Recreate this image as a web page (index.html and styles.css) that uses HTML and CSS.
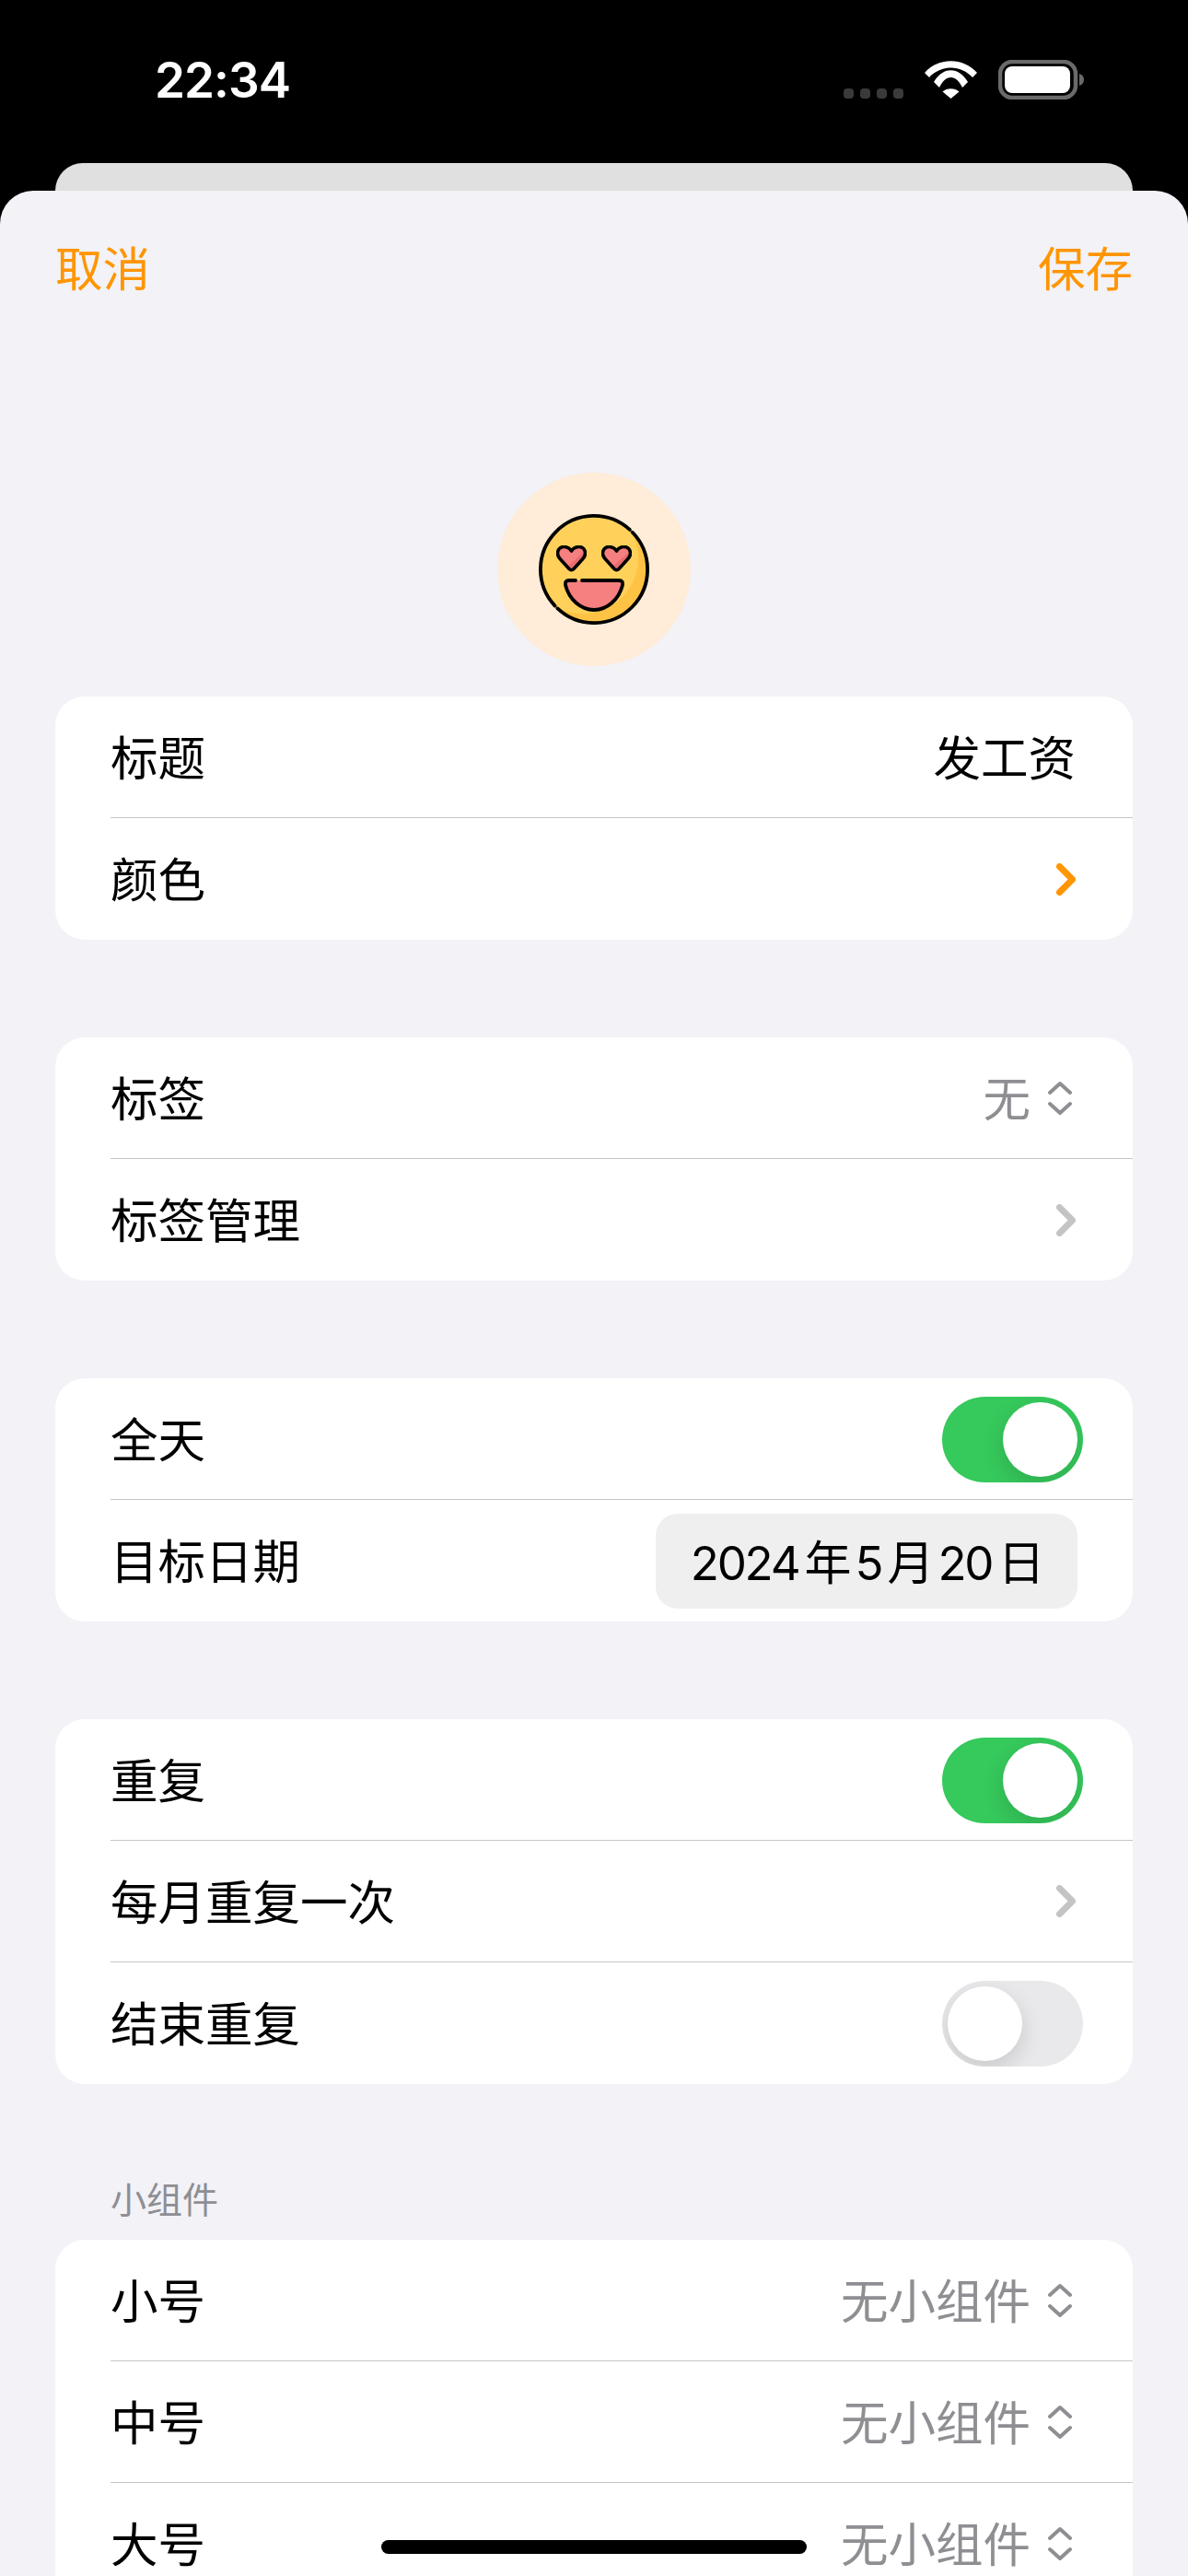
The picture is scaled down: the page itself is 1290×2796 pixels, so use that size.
FILE: index.html
```html
<!DOCTYPE html>
<html lang="zh-CN">
<head>
    <meta charset="UTF-8">
    <meta name="viewport" content="width=device-width, initial-scale=1.0">
    <title>编辑</title>
    <link rel="stylesheet" href="styles.css">
</head>
<body>
  <svg class="defs" xmlns="http://www.w3.org/2000/svg">
    <symbol id="chevron" viewBox="0 0 21 35">
      <path d="M3.5 3.5 L17.5 17.5 L3.5 31.5" fill="none" stroke="currentColor" stroke-width="7" stroke-linecap="round" stroke-linejoin="round"/>
    </symbol>
    <symbol id="updown" viewBox="0 0 26 38">
      <path d="M2 13 L13 3 L24 13 M2 25 L13 35 L24 25" fill="none" stroke="currentColor" stroke-width="4" stroke-linecap="round" stroke-linejoin="round"/>
    </symbol>
    <symbol id="heart" viewBox="0 0 33 29">
      <path d="M16.5 6 C14 2 11 1.5 8 1.5 C4 1.5 1.5 5 1.5 8.5 C1.5 11 2.5 13 4.5 15 L14 25.5 C15.5 27 17.5 27 19 25.5 L28.500 15 C30.500 13 31.500 11 31.500 8.500 C31.500 5 29 1.500 25 1.500 C22 1.500 19 2 16.500 6Z" fill="#f67f80"/>
      <path d="M29 8 L12 23 L14 25.500 C15.500 27 17.500 27 19 25.500 L28.500 15 C30.500 13 31 11 29 8Z" fill="#e96d70"/>
      <path d="M16.5 6 C14 2 11 1.5 8 1.5 C4 1.5 1.5 5 1.5 8.5 C1.5 11 2.5 13 4.5 15 L14 25.5 C15.5 27 17.5 27 19 25.5 L28.500 15 C30.500 13 31.500 11 31.500 8.500 C31.500 5 29 1.500 25 1.500 C22 1.500 19 2 16.500 6Z" fill="none" stroke="#000" stroke-width="3.600" stroke-linejoin="round"/>
    </symbol>
    <clipPath id="face-clip">
      <circle cx="60" cy="60" r="58"/>
    </clipPath>
  </svg>

  <header class="status-bar">
    <span class="time">22:34</span>
    <div class="status-icons">
      <svg class="signal" viewBox="0 0 65 11">
        <rect x="0" width="11" height="11" rx="4" fill="#3a3a3a"/>
        <rect x="18" width="11" height="11" rx="4" fill="#3a3a3a"/>
        <rect x="36" width="11" height="11" rx="4" fill="#3a3a3a"/>
        <rect x="54" width="11" height="11" rx="4" fill="#3a3a3a"/>
      </svg>
      <svg class="wifi" viewBox="0 0 57 41">
        <path d="M0 13 C15 -4 42 -4 57 13 L52 18 C39 4 18 4 5 18Z" fill="#fff"/>
        <path d="M10 23 C20 6 37 6 47 23 L41 29 C34 14.300 23 14.300 16 29Z" fill="#fff"/>
        <path d="M19.500 33.500 C24 29 33 29 37.500 33.500 L28.500 41Z" fill="#fff"/>
      </svg>
      <svg class="battery" viewBox="0 0 93 43">
        <rect x="2" y="2" width="82" height="39" rx="13" fill="none" stroke="#6a6a6a" stroke-width="4.500"/>
        <rect x="7" y="7" width="71" height="29" rx="8" fill="#fff"/>
        <path d="M88 15 C91 16 93 18 93 21.500 C93 25 91 27 88 28Z" fill="#6a6a6a"/>
      </svg>
    </div>
  </header>

  <div class="back-card"></div>

  <main class="sheet">
    <nav class="nav">
      <span>取消</span>
      <span>保存</span>
    </nav>

    <div class="avatar">
      <svg class="face" viewBox="0 0 120 120">
        <circle cx="60" cy="60" r="58" fill="#fec344"/>
        <circle cx="48" cy="48" r="60" fill="#ffd15b" clip-path="url(#face-clip)"/>
        <path d="M101.700 19.700 A58 58 0 0 1 20.400 102.400" fill="none" stroke="#000" stroke-width="3.800" stroke-linecap="round"/>
        <path d="M17.600 99.600 A58 58 0 0 1 98.800 16.900" fill="none" stroke="#000" stroke-width="3.800" stroke-linecap="round"/>
        <use href="#heart" x="19" y="34" width="33" height="29"/>
        <use href="#heart" x="68" y="34" width="33" height="29"/>
        <path d="M33 72 H87 Q92 72 91 77 C87 93 74 104 60 104 C46 104 33 93 29 77 Q28 72 33 72Z" fill="#f67f80"/>
        <path d="M47 72 H87 Q92 72 91 77 C87 93 74 104 60 104 C46 104 33 93 29 77 Q28 72 33 72 H40" fill="none" stroke="#000" stroke-width="3.800" stroke-linecap="round"/>
      </svg>
    </div>

    <section class="card">
      <div class="row">
        <span class="text">标题</span>
        <span class="text">发工资</span>
      </div>
      <div class="row">
        <span class="text">颜色</span>
        <svg class="chevron accent"><use href="#chevron"/></svg>
      </div>
    </section>

    <section class="card">
      <div class="row">
        <span class="text">标签</span>
        <span class="picker"><span class="text">无</span><svg class="updown"><use href="#updown"/></svg></span>
      </div>
      <div class="row">
        <span class="text">标签管理</span>
        <svg class="chevron"><use href="#chevron"/></svg>
      </div>
    </section>

    <section class="card">
      <div class="row">
        <span class="text">全天</span>
        <span class="toggle on"><i class="thumb"></i></span>
      </div>
      <div class="row">
        <span class="text">目标日期</span>
        <span class="date">2024 年 5 月 20 日</span>
      </div>
    </section>

    <section class="card">
      <div class="row">
        <span class="text">重复</span>
        <span class="toggle on"><i class="thumb"></i></span>
      </div>
      <div class="row">
        <span class="text">每月重复一次</span>
        <svg class="chevron"><use href="#chevron"/></svg>
      </div>
      <div class="row">
        <span class="text">结束重复</span>
        <span class="toggle"><i class="thumb"></i></span>
      </div>
    </section>

    <h2 class="section-title">小组件</h2>
    <section class="card">
      <div class="row">
        <span class="text">小号</span>
        <span class="picker"><span class="text">无小组件</span><svg class="updown"><use href="#updown"/></svg></span>
      </div>
      <div class="row">
        <span class="text">中号</span>
        <span class="picker"><span class="text">无小组件</span><svg class="updown"><use href="#updown"/></svg></span>
      </div>
      <div class="row">
        <span class="text">大号</span>
        <span class="picker"><span class="text">无小组件</span><svg class="updown"><use href="#updown"/></svg></span>
      </div>
    </section>
  </main>

  <div class="home-indicator"></div>
</body>
</html>
```

FILE: styles.css
```css
* {
    margin: 0;
    padding: 0;
    box-sizing: border-box;
}
html, body {
    height: 2796px;
    overflow: hidden;
}
body {
    position: relative;
    background: black;
    color: black;
    font-family: Inter, "Noto Sans CJK SC", sans-serif;
    font-size: 51.5px;
}
.defs {
    position: absolute;
    width: 0;
    height: 0;
}

.status-bar {
    display: flex;
    justify-content: space-between;
    height: 177px;
    padding: 65px 113px 0 168px;
}
.time {
    color: white;
    font-size: 53px;
    font-weight: 600;
    line-height: 45px;
    letter-spacing: -1px;
}
.status-icons {
    display: flex;
    align-items: flex-end;
    gap: 23px;
    height: 43px;
}
.signal {
    width: 65px;
    height: 11px;
    margin-bottom: 1px;
}
.wifi {
    width: 57px;
    height: 41px;
    margin-bottom: 1px;
}
.battery {
    width: 93px;
    height: 43px;
}

.back-card {
    height: 30px;
    margin: 0 60px;
    background: #e0e0e0;
    border-radius: 30px 30px 0 0;
}

.sheet {
    height: 2589px;
    padding: 0 60px;
    background: #f2f2f7;
    border-radius: 36px 36px 0 0;
}
.nav {
    display: flex;
    justify-content: space-between;
    align-items: center;
    height: 170px;
    padding-bottom: 7px;
    color: #ff9500;
}
.avatar {
    display: flex;
    align-items: center;
    justify-content: center;
    width: 210px;
    height: 210px;
    margin: 136px auto 33px;
    background: #ffecd9;
    border-radius: 50%;
}
.face {
    width: 120px;
    height: 120px;
}

.card {
    margin-bottom: 106px;
    padding-left: 60px;
    background: white;
    border-radius: 32px;
}
.row {
    display: flex;
    justify-content: space-between;
    align-items: center;
    height: 132px;
    padding-right: 62px;
    border-bottom: 1px solid #c6c6c8;
}
.row:last-child {
    border-bottom: 0;
}
.text {
    margin-bottom: 5px;
}
.picker {
    display: flex;
    align-items: center;
    gap: 19px;
    padding-right: 4px;
    color: #8e8e93;
}
.updown {
    width: 26px;
    height: 38px;
}
.chevron {
    width: 21px;
    height: 35px;
    color: #c4c4c6;
}
.chevron.accent {
    color: #ff9500;
}

.toggle {
    display: block;
    position: relative;
    overflow: hidden;
    width: 153px;
    height: 93px;
    margin: 1px -8px 0 0;
    background: #e9e9eb;
    border-radius: 47px;
}
.toggle.on {
    background: #36c95c;
}
.thumb {
    position: absolute;
    top: 6px;
    left: 6px;
    width: 81px;
    height: 81px;
    background: white;
    border-radius: 50%;
    box-shadow: 0 9px 24px rgba(0, 0, 0, 0.14);
}
.toggle.on .thumb {
    left: 66px;
}

.date {
    display: flex;
    align-items: center;
    justify-content: center;
    width: 458px;
    height: 103px;
    margin-right: -2px;
    padding-bottom: 3px;
    background: #efeff0;
    border-radius: 24px;
    font-size: 51px;
    letter-spacing: -2.2px;
    word-spacing: -6px;
}

.section-title {
    margin: -2px 0 21px 60px;
    color: #8e8e93;
    font-size: 39px;
    font-weight: 400;
    line-height: 44px;
}

.home-indicator {
    position: absolute;
    left: 414px;
    bottom: 24px;
    width: 462px;
    height: 15px;
    background: black;
    border-radius: 8px;
}
```
